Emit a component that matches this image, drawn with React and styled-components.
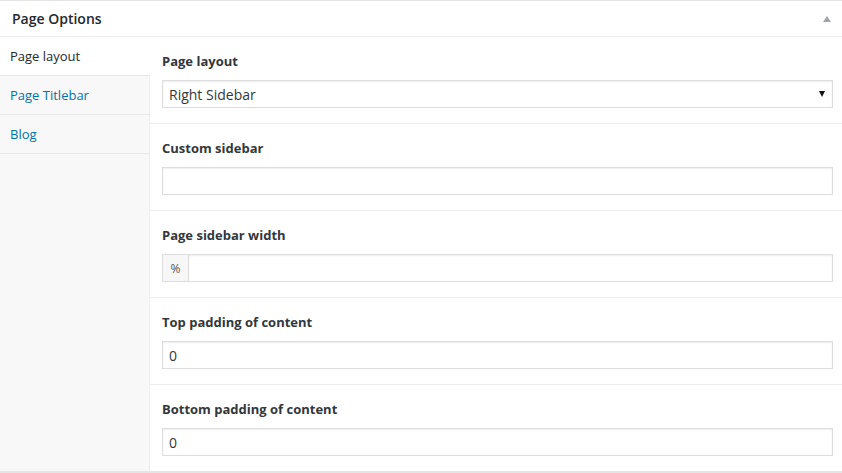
import React from "react";
import styled, { createGlobalStyle } from "styled-components";

const GlobalStyle = createGlobalStyle`
  body {
    margin: 0;
    background: #fff;
    font-family: "Open Sans", "Liberation Sans", sans-serif;
    font-size: 13px;
    color: #32373c;
  }
`;

const tabs = ["Page layout", "Page Titlebar", "Blog"];

const fields = [
  { label: "Page layout", type: "select", value: "Right Sidebar" },
  { label: "Custom sidebar", type: "text", value: "" },
  { label: "Page sidebar width", type: "addon", value: "" },
  { label: "Top padding of content", type: "text", value: "0" },
  { label: "Bottom padding of content", type: "text", value: "0" },
];

function Field({ field }) {
  if (field.type === "select") {
    return (
      <SelectWrap>
        <Select defaultValue={field.value}>
          <option>Right Sidebar</option>
          <option>Left Sidebar</option>
          <option>No Sidebar</option>
        </Select>
        <SelectArrow />
      </SelectWrap>
    );
  }
  if (field.type === "addon") {
    return (
      <AddonGroup>
        <Addon>%</Addon>
        <Input $joined defaultValue={field.value} />
      </AddonGroup>
    );
  }
  return <Input defaultValue={field.value} />;
}

function App() {
  return (
    <>
      <GlobalStyle />
      <Postbox>
        <Header>
          <Title>Page Options</Title>
          <Toggle />
        </Header>
        <Body>
          <Sidebar>
            {tabs.map((t, i) => (
              <Tab key={t} $active={i === 0}>
                {t}
              </Tab>
            ))}
          </Sidebar>
          <Panel>
            {fields.map((f) => (
              <Section key={f.label}>
                <Label>{f.label}</Label>
                <Field field={f} />
              </Section>
            ))}
          </Panel>
        </Body>
      </Postbox>
    </>
  );
}

const Postbox = styled.div`
  border-top: 1px solid #e5e5e5;
  border-bottom: 2px solid #e5e5e5;
  background: #fff;
`;

const Header = styled.div`
  height: 35px;
  border-bottom: 1px solid #eee;
  display: flex;
  align-items: center;
  justify-content: space-between;
  padding: 0 11px 0 12px;
`;

const Title = styled.h2`
  margin: 0;
  font-size: 14px;
  font-weight: 600;
  color: #23282d;
  line-height: 1.4;
`;

const Toggle = styled.span`
  width: 0;
  height: 0;
  border-left: 4px solid transparent;
  border-right: 4px solid transparent;
  border-bottom: 6px solid #a0a5aa;
  margin-top: 1px;
`;

const Body = styled.div`
  display: flex;
`;

const Sidebar = styled.ul`
  list-style: none;
  margin: 0;
  padding: 0;
  width: 149px;
  flex-shrink: 0;
  background: #f8f8f8;
  border-right: 1px solid #eee;
`;

const Tab = styled.li`
  height: 38px;
  line-height: 38px;
  padding-left: 10px;
  border-bottom: 1px solid #e8e8e8;
  font-size: 13px;
  color: ${(p) => (p.$active ? "#23282d" : "#0073aa")};
  background: ${(p) => (p.$active ? "#fff" : "transparent")};
  margin-right: ${(p) => (p.$active ? "-1px" : "0")};
  position: relative;
`;

const Panel = styled.div`
  flex: 1;
`;

const Section = styled.div`
  padding: 15px 9px 15px 12px;
  border-bottom: 1px solid #eee;
  &:last-child {
    border-bottom: none;
  }
`;

const Label = styled.div`
  font-weight: 700;
  font-size: 13px;
  line-height: 18px;
  color: #32373c;
  margin-bottom: 10px;
`;

const Input = styled.input`
  box-sizing: border-box;
  display: block;
  width: 100%;
  height: 28px;
  margin: 0;
  padding: 0 6px;
  border: 1px solid #ddd;
  ${(p) => (p.$joined ? "border-left: none;" : "")}
  border-radius: 0;
  box-shadow: inset 0 1px 2px rgba(0, 0, 0, 0.07);
  font-family: "Open Sans", "Liberation Sans", sans-serif;
  font-size: 14px;
  color: #32373c;
  outline: none;
  background: #fff;
`;

const SelectWrap = styled.div`
  position: relative;
`;

const Select = styled.select`
  box-sizing: border-box;
  display: block;
  width: 100%;
  height: 28px;
  margin: 0;
  padding: 0 6px;
  border: 1px solid #ddd;
  border-radius: 0;
  box-shadow: inset 0 1px 2px rgba(0, 0, 0, 0.07);
  appearance: none;
  background: #fff;
  font-family: "Open Sans", "Liberation Sans", sans-serif;
  font-size: 14px;
  color: #32373c;
  outline: none;
`;

const SelectArrow = styled.span`
  position: absolute;
  right: 8px;
  top: 11px;
  width: 0;
  height: 0;
  border-left: 3px solid transparent;
  border-right: 3px solid transparent;
  border-top: 6px solid #111;
  pointer-events: none;
`;

const AddonGroup = styled.div`
  display: flex;
`;

const Addon = styled.span`
  box-sizing: border-box;
  width: 27px;
  height: 28px;
  flex-shrink: 0;
  display: flex;
  align-items: center;
  justify-content: center;
  background: #f7f7f7;
  border: 1px solid #ddd;
  font-size: 12px;
  color: #555;
`;

export default App;
